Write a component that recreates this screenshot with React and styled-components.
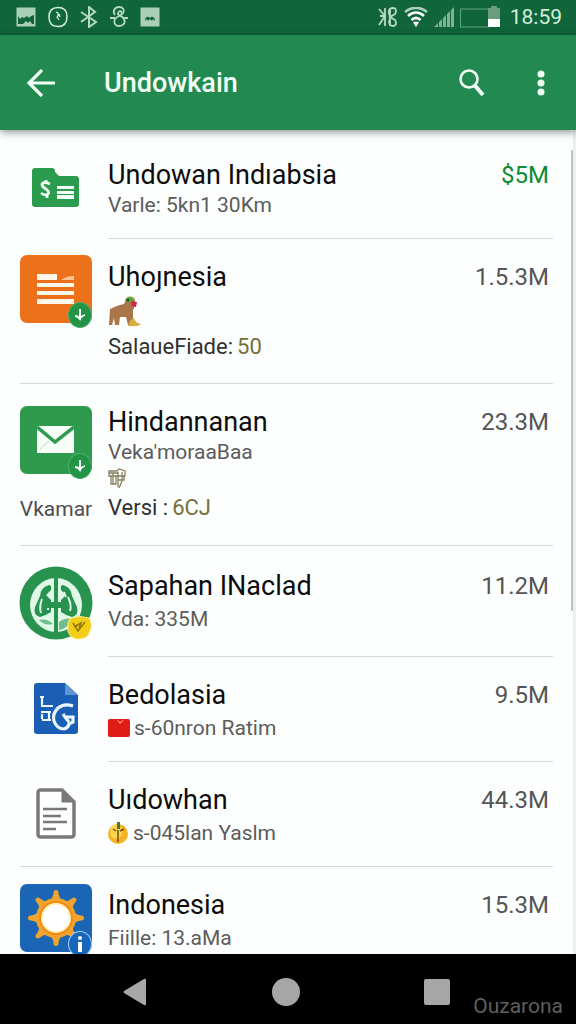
import React from 'react'
import styled, { createGlobalStyle } from 'styled-components';

const GlobalStyle = createGlobalStyle`
    * {
        box-sizing: border-box;
    }

    body {
        margin: 0;

        font-family: Roboto, "Noto Sans", "Noto Sans CJK SC", sans-serif;
        color: #0c0c0c;
        background-color: #000;
    }

    svg {
        display: block;
        flex-shrink: 0;
    }
`;

const Screen = styled.div`
    height: 100vh;

    display: flex;
    flex-direction: column;
`;

const StatusBar = styled.div`
    height: 35px;
    padding: 0 14px 2px 16px;

    display: flex;
    align-items: center;
    justify-content: space-between;

    color: #d3eedd;
    background-color: #10653a;
`;

const StatusGroup = styled.div`
    display: flex;
    align-items: center;
    gap: ${({ $gap }) => $gap}px;
`;

const Clock = styled.span`
    margin-left: 4px;

    font-size: 21px;
    line-height: 24px;
`;

const AppBar = styled.header`
    position: relative;
    z-index: 1;

    height: 95px;
    padding: 0 14px 0 20px;

    display: flex;
    align-items: center;

    color: #f1fff6;
    background-color: #228a50;
    box-shadow: 0 2px 8px rgba(0, 0, 0, 0.45);
`;

const BarTitle = styled.h1`
    flex: 1;
    margin: 0 0 0 42px;

    font-size: 27px;
    font-weight: 500;
    line-height: 36px;
`;

const BarButton = styled.button`
    width: 42px;
    height: 42px;
    margin-left: ${({ $gap }) => $gap || 0}px;
    padding: 0;
    display: flex;
    align-items: center;
    justify-content: center;

    color: inherit;
    background-color: transparent;
    border: none;
    cursor: pointer;
`;

const Main = styled.main`
    position: relative;

    flex: 1;
    min-height: 0;
    overflow: hidden;

    background-color: #fdfefe;
    border-right: 3px solid #eceef0;
`;

const ScrollThumb = styled.div`
    position: absolute;
    top: 20px;
    right: -1px;

    width: 3px;
    height: 56%;

    background-color: #bcbfc0;
    border-radius: 2px;
`;

const List = styled.ul`
    margin: 0;
    padding: 7px 20px 0;

    list-style: none;
`;

const Item = styled.li`
    position: relative;

    display: flex;
    gap: 16px;
    padding-top: ${({ $top }) => $top || 22}px;
    padding-bottom: ${({ $bottom }) => $bottom}px;

    &::after {
        content: "";
        position: absolute;
        left: ${({ $inset }) => ($inset ? 88 : 0)}px;
        right: 0;
        bottom: 0;
        height: 1px;
        background-color: #d5d8d9;
    }
`;

const Leading = styled.div`
    width: 72px;
    margin-top: ${({ $shift }) => $shift || 0}px;

    display: flex;
    flex-direction: column;
    align-items: center;
    flex-shrink: 0;
`;

const Tile = styled.div`
    position: relative;

    width: 72px;
    height: 68px;
    display: flex;
    align-items: center;
    justify-content: center;

    background-color: ${({ $color }) => $color};
    border-radius: 7px;
`;

const Badge = styled.div`
    position: absolute;
    right: 0;
    bottom: -5px;

    width: 24px;
    height: 26px;
    display: flex;
    align-items: center;
    justify-content: center;

    background-color: ${({ $color }) => $color};
    border: 1px solid ${({ $ring }) => $ring || '#4fae6b'};
    border-radius: 50%;
`;

const Caption = styled.span`
    margin-top: 21px;

    font-size: 21px;
    line-height: 28px;
    color: #4d4d4d;
`;

const Body = styled.div`
    flex: 1;
    min-width: 0;
`;

const Title = styled.h2`
    margin: 0;

    font-size: 27px;
    font-weight: 400;
    line-height: 32px;
    white-space: nowrap;
`;

const Line = styled.p`
    height: ${({ $height }) => $height || 34}px;
    margin: 0;
    display: flex;
    align-items: center;
    gap: 4px;

    font-size: ${({ $dark }) => ($dark ? 22 : 21)}px;
    color: ${({ $dark }) => ($dark ? '#303030' : '#5c5c5c')};
    white-space: nowrap;
`;

const Accent = styled.span`
    color: #74703c;
`;

const Size = styled.span`
    margin-right: 4px;

    font-size: 24px;
    line-height: 32px;
    color: ${({ $green }) => ($green ? '#0f8a35' : '#555')};
`;

const NavBar = styled.nav`
    position: relative;

    height: 70px;
    padding: 6px 4px 0 0;
    display: flex;
    align-items: center;
    justify-content: center;
    gap: 2px;

    background-color: #000;
`;

const NavButton = styled.button`
    width: 26%;
    height: 48px;
    padding: 0;
    display: flex;
    align-items: center;
    justify-content: center;

    color: #a6a6a6;
    background-color: transparent;
    border: none;
    cursor: pointer;
`;

const Signature = styled.span`
    position: absolute;
    right: 13px;
    bottom: 6px;

    font-size: 21px;
    line-height: 24px;
    color: #5f5f5f;
`;

const PictureIcon = ({ small }) => (
    <svg width="20" height="20" viewBox="0 0 20 20">
        <rect x="0.500" y="0.500" width="19" height="19" fill="#a9d0b6" />
        {small
            ? <path d="M5 14c0-4 2-5 4-4l1 1 1-1c3-1 4 2 4 4l-2-2-1 2-2-2-2 2-1-2z" fill="#10653a" />
            : <path d="M2 17V9l2 3 2-2 2 1 3-2 2 2 2-2 3-1v9H16l-2-3-2 2-2-2-3 3z" fill="#10653a" />}
    </svg>
);

const AlarmIcon = () => (
    <svg width="22" height="22" viewBox="0 0 22 22" fill="none" stroke="currentColor">
        <path d="M11 1.500C5 1.500 2 4 2 11s3 9.500 9 9.500 9-4 9-10S17 1.500 11 1.500z" strokeWidth="1.500" />
        <path d="M9 6l2 1v3l-1 1 2 3M12 8l1 3" strokeWidth="1.300" />
    </svg>
);

const BluetoothIcon = () => (
    <svg width="18" height="22" viewBox="0 0 18 22" fill="none" stroke="#b5dac2" strokeWidth="2">
        <path d="M1 6l15 10-7 5V1l6 5L1 16" />
    </svg>
);

const SyncIcon = () => (
    <svg width="20" height="22" viewBox="0 0 20 22" fill="none" stroke="#b5dac2" strokeWidth="1.800">
        <path d="M6 9C3 5 6 1 10 1s6 3 4 6-6 3-8 6 0 7 4 7 7-3 5-7-7-3-6-6 4-2 3 0M1 12h5M14 12h5" />
    </svg>
);

const DoubleIcon = () => (
    <svg width="20" height="20" viewBox="0 0 20 20" fill="none" stroke="#b5dac2" strokeWidth="1.800">
        <path d="M1 2l6 7-6 9M7 1v18M2 9h6M12 1v18M12 9C9 3 12 1 15 1s4 3 2 6l-5 3 5 3c2 3 1 6-2 6s-5-3-3-7" />
    </svg>
);

const WifiIcon = () => (
    <svg width="24" height="20" viewBox="0 0 24 20" fill="none" strokeWidth="2.600">
        <path d="M1 5C7-0.500 17-0.500 23 5" stroke="#a9d0b6" />
        <path d="M4 9c5-4.500 11-4.500 16 0M7.500 13c3-3 6-3 9 0" stroke="#fff" />
        <path d="M9 15.500q3-2 6 0L12 20z" fill="#fff" />
    </svg>
);

const SignalIcon = () => (
    <svg width="20" height="20" viewBox="0 0 20 20" fill="#7fb392">
        <path d="M0 20l4-4v4zM5 15l3-3v8H5zM9 11l3-3v12H9zM13 7l3-3v16h-3zM17 3l3-3v20h-3z" />
    </svg>
);

const BatteryIcon = () => (
    <svg width="40" height="22" viewBox="0 0 40 22">
        <rect x="0.500" y="3" width="28" height="18" fill="none" stroke="#5ea47a" />
        <path d="M28 2h3V0h6v2h3v11H28z" fill="#6b9c7e" />
        <path d="M28 13h12v8H28z" fill="#fff" />
    </svg>
);

const FolderIcon = () => (
    <svg width="48" height="40" viewBox="0 0 48 40">
        <path d="M3 0h17q3 0 3 3v1l4 4h17q3 0 3 3v25q0 3-3 3H3q-3 0-3-3V3q0-3 3-3z" fill="#2b9b4d" />
        <path d="M18 16q-6-3-8 0 0 3 4 5 4 3 2 5-3 2-7-1M14 12v3M15 27v3" fill="none" stroke="#f2fff5" strokeWidth="2.800" />
        <path d="M25 18h17v3H25zM25 23h17v3H25zM25 27h17v4H25z" fill="#f2fff5" />
    </svg>
);

const LinesIcon = () => (
    <svg width="38" height="32" viewBox="0 0 38 32" fill="#fff5e8">
        <path d="M0 1h20v6H0zM0 10h37v4H0zM0 18h37v4H0zM0 26h37v5H0z" />
        <path d="M24 7q5-4 13-4v4z" fill="#ffc391" />
    </svg>
);

const MailIcon = () => (
    <svg width="38" height="28" viewBox="0 0 38 28">
        <path d="M0 0h37v27H0z" fill="#f5fff7" />
        <path d="M0 1l18 15L37 1" fill="none" stroke="#2f994e" strokeWidth="3.500" />
        <path d="M3 23l9-8" stroke="#b8d8bf" />
    </svg>
);

const ArrowBadgeIcon = () => (
    <svg width="12" height="14" viewBox="0 0 12 14" fill="none" stroke="#fff" strokeWidth="1.800">
        <path d="M6 1v11M1 8q3 0 5 3 1-3 5-4" />
    </svg>
);

const SealIcon = () => (
    <svg width="74" height="75" viewBox="0 0 74 75">
        <circle cx="37" cy="37" r="36.500" fill="#28924f" />
        <ellipse cx="37" cy="39" rx="26" ry="27" fill="#dff8e8" />
        <path d="M21 30q1-9 9-11 3 0 2 5l-5 5 5 5v12q-6 4-11 5-7-2-5-10zM53 30q-1-9-9-11-3 0-2 5l5 5-5 5v12q6 4 11 5 7-2 5-10z" fill="#28924f" />
        <path d="M23 33q-3 8-1 14M49 31q4 8 2 14M29 37v7M45 26l2 5" fill="none" stroke="#dff8e8" strokeWidth="2" />
        <path d="M25 36h22v6H25z" fill="#28924f" />
        <path d="M20 54q8-2 14 4-8 2-14-4zM40 56q6-5 13-3-3 9-13 11z" fill="#6fbd8b" />
        <path d="M35 10h4v57h-4z" fill="#28924f" />
        <path d="M52 52q9-3 18 0 4 6 1 13-2 8-11 8-9 0-11-8-1-10 3-13z" fill="#f2cf16" stroke="#fff28a" />
        <path d="M54 57l5 8 7-9M55 61l7-4-2 5" fill="none" stroke="#92740b" strokeWidth="1.500" />
    </svg>
);

const BlueFileIcon = () => (
    <svg width="44" height="51" viewBox="0 0 44 51">
        <path d="M3 0h28l13 12v36q0 3-3 3H3q-3 0-3-3V3q0-3 3-3z" fill="#1b5eb5" />
        <path d="M31 0l13 12H31z" fill="#5f94d3" />
        <path d="M6 14h4M8 14v9h11M7 29h10M8 36v-5M8 37h9M15 29v8" fill="none" stroke="#eaf7ff" strokeWidth="2.200" />
        <path d="M39 23q-9-3-15 2-6 6-4 13 3 8 10 8 4-1 5-5l4-2v-5h-8l-2-3M31 34l4 5" fill="none" stroke="#eaf7ff" strokeWidth="3.200" />
    </svg>
);

const GreyFileIcon = () => (
    <svg width="40" height="51" viewBox="0 0 40 51" fill="none" stroke="#797979">
        <path d="M5 2h21l12 12v32q0 3-3 3H5q-3 0-3-3V5q0-3 3-3z" strokeWidth="3.500" />
        <path d="M26 2l12 12H26z" fill="#797979" />
        <path d="M7 21h24M7 28h18M7 34h24M7 41h13" strokeWidth="2.500" />
    </svg>
);

const teeth = [0, 45, 90, 135, 180, 225, 270, 315];

const SunIcon = () => (
    <svg width="58" height="58" viewBox="0 0 58 58">
        <g fill="#f0a42e">
            {teeth.map(angle => (
                <path key={angle} d="M19 14q7-3 7.500-10 0-3 2.500-3t2.500 3q.500 7 7.500 10z" transform={`rotate(${angle} 29 29)`} />
            ))}
            <circle cx="29" cy="29" r="20" />
        </g>
        <circle cx="29" cy="29" r="17" fill="#f18a12" />
        <circle cx="29" cy="29" r="15" fill="#fff0bd" />
        <circle cx="29" cy="29" r="13" fill="#fff" />
    </svg>
);

const InfoIcon = () => (
    <svg width="4" height="16" viewBox="0 0 4 16" fill="#fff">
        <circle cx="2" cy="2" r="2" />
        <path d="M0 6h4v10H0z" />
    </svg>
);

const AnimalIcon = () => (
    <svg width="34" height="31" viewBox="0 0 34 31">
        <path d="M2 13q8-4 14-5l2-5q3-4 8-1l2 6-3 6v15h-5l-2-8h-6l-1 8H7l-1-7-2 7H1z" fill="#a9764a" />
        <path d="M17 4q3-5 7-3l3 3-5 2z" fill="#62ad3a" />
        <circle cx="20" cy="4" r="1.500" fill="#14572c" />
        <path d="M23 5l6 1-1 5-4-1z" fill="#c9294a" />
        <path d="M20 30q2-7 6-8 1 5 7 6-3 3-13 2z" fill="#d6af43" />
    </svg>
);

const GlyphIcon = () => (
    <svg width="18" height="21" viewBox="0 0 18 21" fill="none" stroke="#85815f" strokeWidth="1.300">
        <path d="M1 3h8l2-2 6 2v5H1zM3 8v8h5V8M5 5v11M10 4v15M10 12h6V7M14 4v9l-3 7M1 5h9" />
    </svg>
);

const RedFlag = () => (
    <svg width="22" height="18" viewBox="0 0 22 18">
        <rect width="22" height="18" rx="2" fill="#df1c16" />
        <path d="M8 0l4 5 5-5-5 3z" fill="#ff9d86" />
    </svg>
);

const FruitIcon = () => (
    <svg width="21" height="22" viewBox="0 0 21 22">
        <circle cx="10" cy="12" r="10" fill="#f3b323" />
        <ellipse cx="8" cy="10" rx="6" ry="7" fill="#ffd451" />
        <path d="M10 8v12M5 7l3 2M12 9l4-2" stroke="#6e4e12" strokeWidth="1.500" />
        <path d="M9 0h3v7H9z" fill="#3f7d2d" />
    </svg>
);

const App = () => {
  return (
      <Screen>
          <GlobalStyle />
          <StatusBar>
              <StatusGroup $gap={11}>
                  <PictureIcon />
                  <AlarmIcon />
                  <BluetoothIcon />
                  <SyncIcon />
                  <PictureIcon small />
              </StatusGroup>
              <StatusGroup $gap={6}>
                  <DoubleIcon />
                  <WifiIcon />
                  <SignalIcon />
                  <BatteryIcon />
                  <Clock>18:59</Clock>
              </StatusGroup>
          </StatusBar>

          <AppBar>
              <BarButton aria-label='Back'>
                  <svg width="28" height="28" viewBox="0 0 28 28" fill="none" stroke="currentColor" strokeWidth="3.200">
                      <path d="M28 14H3M15 1L2 14l13 13" />
                  </svg>
              </BarButton>
              <BarTitle>Undowkain</BarTitle>
              <BarButton aria-label='Search'>
                  <svg width="26" height="28" viewBox="0 0 26 28" fill="none" stroke="currentColor">
                      <circle cx="10" cy="10" r="8.500" strokeWidth="2.600" />
                      <path d="M15.500 16L24 26" strokeWidth="4" />
                  </svg>
              </BarButton>
              <BarButton $gap={27} aria-label='More options'>
                  <svg width="8" height="26" viewBox="0 0 8 26" fill="currentColor">
                      <circle cx="4" cy="4" r="3.500" />
                      <circle cx="4" cy="13" r="3.500" />
                      <circle cx="4" cy="22" r="3.500" />
                  </svg>
              </BarButton>
          </AppBar>

          <Main>
              <List>
                  <Item $bottom={20} $inset>
                      <Leading $shift={9}><FolderIcon /></Leading>
                      <Body>
                          <Title>Undowan Indıabsia</Title>
                          <Line $height={28}>Varle: 5kn1 30Km</Line>
                      </Body>
                      <Size $green>$5M</Size>
                  </Item>

                  <Item $bottom={21}>
                      <Leading $shift={-6}>
                          <Tile $color='#ed711b'>
                              <LinesIcon />
                              <Badge $color='#239345'><ArrowBadgeIcon /></Badge>
                          </Tile>
                      </Leading>
                      <Body>
                          <Title>Uhoȷnesia</Title>
                          <Line $height={36}><AnimalIcon /></Line>
                          <Line $dark>SalaueFiade: <Accent>50</Accent></Line>
                      </Body>
                      <Size>1.5.3M</Size>
                  </Item>

                  <Item $bottom={22}>
                      <Leading>
                          <Tile $color='#2f994e'>
                              <MailIcon />
                              <Badge $color='#239345'><ArrowBadgeIcon /></Badge>
                          </Tile>
                          <Caption>Vkamar</Caption>
                      </Leading>
                      <Body>
                          <Title>Hindannanan</Title>
                          <Line $height={28}>Veka'moraaBaa</Line>
                          <Line $height={24}><GlyphIcon /></Line>
                          <Line $dark>Versi : <Accent>6CJ</Accent></Line>
                      </Body>
                      <Size>23.3M</Size>
                  </Item>

                  <Item $top={24} $bottom={16} $inset>
                      <Leading $shift={-4}><SealIcon /></Leading>
                      <Body>
                          <Title>Sapahan INaclad</Title>
                          <Line>Vda: 335M</Line>
                      </Body>
                      <Size>11.2M</Size>
                  </Item>

                  <Item $bottom={17} $inset>
                      <Leading $shift={4}><BlueFileIcon /></Leading>
                      <Body>
                          <Title>Bedolasia</Title>
                          <Line><RedFlag />s-60nron Ratim</Line>
                      </Body>
                      <Size>9.5M</Size>
                  </Item>

                  <Item $bottom={17}>
                      <Leading $shift={4}><GreyFileIcon /></Leading>
                      <Body>
                          <Title>Uıdowhan</Title>
                          <Line><FruitIcon />s-045lan Yaslm</Line>
                      </Body>
                      <Size>44.3M</Size>
                  </Item>

                  <Item $bottom={17}>
                      <Leading $shift={-5}>
                          <Tile $color='#1b66b4'>
                              <SunIcon />
                              <Badge $color='#1867bd' $ring='#9cd2ff'><InfoIcon /></Badge>
                          </Tile>
                      </Leading>
                      <Body>
                          <Title>Indonesia</Title>
                          <Line>Fiille: 13.aMa</Line>
                      </Body>
                      <Size>15.3M</Size>
                  </Item>
              </List>
              <ScrollThumb />
          </Main>

          <NavBar>
              <NavButton aria-label='Back'>
                  <svg width="24" height="28" viewBox="0 0 24 28" fill="currentColor">
                      <path d="M1 13L21 1q2-1 2 1v24q0 2-2 1L1 15q-1-1 0-2z" />
                  </svg>
              </NavButton>
              <NavButton aria-label='Home'>
                  <svg width="28" height="28" viewBox="0 0 28 28" fill="currentColor">
                      <circle cx="14" cy="14" r="14" />
                  </svg>
              </NavButton>
              <NavButton aria-label='Recent apps'>
                  <svg width="26" height="26" viewBox="0 0 26 26" fill="currentColor">
                      <rect width="26" height="26" rx="2" />
                  </svg>
              </NavButton>
              <Signature>Ouzarona</Signature>
          </NavBar>
      </Screen>
  )
}

export default App
